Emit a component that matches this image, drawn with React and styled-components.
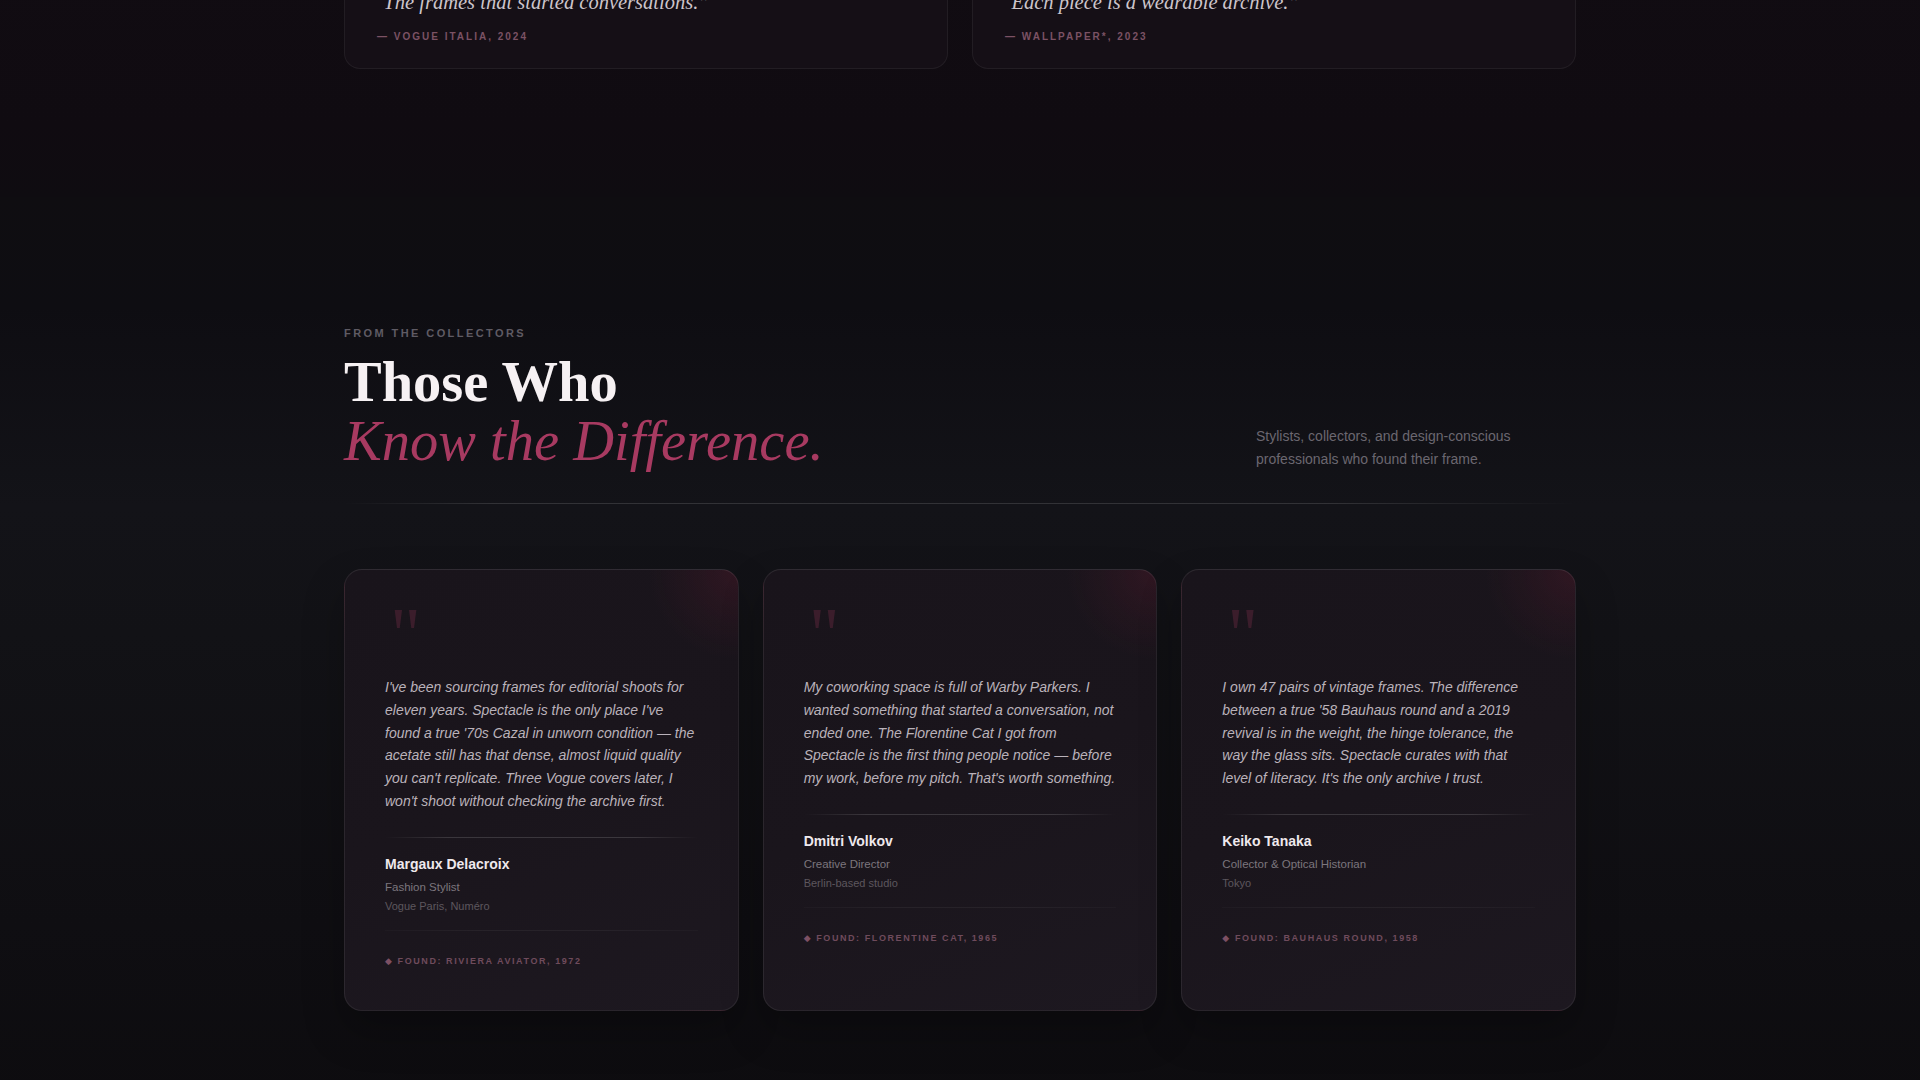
import React from 'react';
import styled, { createGlobalStyle } from 'styled-components';

const GlobalStyle = createGlobalStyle`
  *, *::before, *::after { box-sizing: border-box; }
  html, body { margin: 0; padding: 0; background: #0d0c0f; }
  body {
    font-family: "Liberation Sans", Arial, sans-serif;
    -webkit-font-smoothing: antialiased;
  }
`;

const Page = styled.main`
  min-height: 100vh;
  overflow: hidden;
`;

const PressSection = styled.section`
  background: linear-gradient(180deg, #110c12 0%, #100b11 70%, #0f0c11 100%);
  margin-top: -46px;
  padding: 0 0 128px;
`;

const Container = styled.div`
  width: 1232px;
  margin: 0 auto;
`;

const PressGrid = styled.div`
  display: grid;
  grid-template-columns: 1fr 1fr;
  gap: 24px;
`;

const PressCard = styled.figure`
  margin: 0;
  padding: 32px 32px 24px;
  background: #150f16;
  border: 1px solid rgba(255, 255, 255, 0.06);
  border-radius: 16px;
`;

const PressQuote = styled.blockquote`
  margin: 0 0 12px;
  font-family: "Liberation Serif", "Times New Roman", serif;
  font-style: italic;
  font-size: 20.5px;
  line-height: 30px;
  text-indent: -5px;
  color: #cdc5cb;
`;

const PressCite = styled.figcaption`
  font-size: 10px;
  line-height: 15px;
  font-weight: 700;
  letter-spacing: 0.2em;
  text-transform: uppercase;
  color: #7b5264;
`;

const TestimonialSection = styled.section`
  padding: 128px 0 96px;
  background: linear-gradient(
    180deg,
    #0f0d11 0%,
    #0e0d12 12%,
    #131318 34%,
    #121216 48%,
    #0f0e12 80%,
    #0d0c0f 100%
  );
`;

const Eyebrow = styled.div`
  font-size: 11px;
  line-height: 16px;
  font-weight: 700;
  letter-spacing: 0.22em;
  text-transform: uppercase;
  color: #5f5b64;
  margin-bottom: 12px;
`;

const HeaderRow = styled.header`
  display: flex;
  justify-content: space-between;
  align-items: flex-end;
`;

const Heading = styled.h2`
  margin: 0;
  font-family: "Liberation Serif", "Times New Roman", serif;
  font-size: 56.5px;
  line-height: 1.045;
  font-weight: 700;
  color: #f6f1f3;
`;

const Accent = styled.em`
  display: block;
  font-style: italic;
  font-weight: 400;
  color: #a83a61;
`;

const Lede = styled.p`
  margin: 0 0 1px;
  width: 320px;
  font-size: 14px;
  line-height: 22.4px;
  color: #6b6770;
`;

const Rule = styled.div`
  height: 1px;
  margin: 32px 0 65px;
  background: linear-gradient(
    90deg,
    rgba(255, 255, 255, 0) 0%,
    rgba(255, 255, 255, 0.13) 12%,
    rgba(255, 255, 255, 0.13) 80%,
    rgba(255, 255, 255, 0) 100%
  );
`;

const CardGrid = styled.div`
  display: grid;
  grid-template-columns: repeat(3, 1fr);
  gap: 24px;
  align-items: stretch;
`;

const Card = styled.article`
  padding: 40px 40px 41px;
  border-radius: 18px;
  border: 1px solid rgba(255, 255, 255, 0.07);
  border-top-color: rgba(255, 255, 255, 0.09);
  background:
    radial-gradient(circle at 100% 0%, rgba(140, 30, 60, 0.2) 0px, rgba(140, 30, 60, 0.08) 50px, rgba(140, 30, 60, 0) 90px),
    linear-gradient(160deg, #19141b 0%, #1a151c 50%, #1d1820 100%);
  box-shadow: 0 20px 40px rgba(0, 0, 0, 0.25);
`;

const QuoteMark = styled.div`
  height: 60px;
  margin: 0 0 6px 5px;
  font-family: "Liberation Serif", "Times New Roman", serif;
  font-size: 76px;
  line-height: 48px;
  color: rgba(166, 58, 96, 0.24);
  user-select: none;
`;

const QuoteText = styled.p`
  margin: 0;
  font-style: italic;
  font-size: 14px;
  line-height: 22.75px;
  color: #bab2ba;
`;

const AuthorRule = styled.div`
  height: 1px;
  margin: 24px 0 16px;
  background: linear-gradient(
    90deg,
    rgba(255, 255, 255, 0) 0%,
    rgba(255, 255, 255, 0.14) 20%,
    rgba(255, 255, 255, 0.14) 80%,
    rgba(255, 255, 255, 0) 100%
  );
`;

const Name = styled.div`
  font-size: 14px;
  line-height: 20px;
  font-weight: 700;
  color: #efe9ed;
  margin-bottom: 4px;
`;

const Role = styled.div`
  font-size: 11.5px;
  line-height: 18px;
  color: #7c767d;
`;

const Org = styled.div`
  margin-top: 2px;
  font-size: 11px;
  line-height: 16px;
  color: #5d575e;
`;

const FoundRule = styled.div`
  height: 1px;
  margin-top: 16px;
  background: linear-gradient(
    90deg,
    rgba(255, 255, 255, 0.02) 0%,
    rgba(255, 255, 255, 0.05) 30%,
    rgba(255, 255, 255, 0.05) 70%,
    rgba(255, 255, 255, 0.02) 100%
  );
`;

const Found = styled.div`
  margin-top: 22px;
  font-size: 9px;
  line-height: 16px;
  font-weight: 700;
  letter-spacing: 0.175em;
  text-transform: uppercase;
  color: #6f4b5c;
`;

const Diamond = styled.span`
  font-family: "DejaVu Sans", sans-serif;
  color: #7d5064;
`;

const press = [
  { quote: '\u201CThe frames that started conversations.\u201D', cite: '\u2014 Vogue Italia, 2024' },
  { quote: '\u201CEach piece is a wearable archive.\u201D', cite: '\u2014 Wallpaper*, 2023' },
];

const testimonials = [
  {
    text: "I've been sourcing frames for editorial shoots for eleven years. Spectacle is the only place I've found a true '70s Cazal in unworn condition \u2014 the acetate still has that dense, almost liquid quality you can't replicate. Three Vogue covers later, I won't shoot without checking the archive first.",
    name: 'Margaux Delacroix',
    role: 'Fashion Stylist',
    org: 'Vogue Paris, Num\u00e9ro',
    found: 'Found: Riviera Aviator, 1972',
  },
  {
    text: "My coworking space is full of Warby Parkers. I wanted something that started a conversation, not ended one. The Florentine Cat I got from Spectacle is the first thing people notice \u2014 before my work, before my pitch. That's worth something.",
    name: 'Dmitri Volkov',
    role: 'Creative Director',
    org: 'Berlin-based studio',
    found: 'Found: Florentine Cat, 1965',
  },
  {
    text: "I own 47 pairs of vintage frames. The difference between a true '58 Bauhaus round and a 2019 revival is in the weight, the hinge tolerance, the way the glass sits. Spectacle curates with that level of literacy. It's the only archive I trust.",
    name: 'Keiko Tanaka',
    role: 'Collector & Optical Historian',
    org: 'Tokyo',
    found: 'Found: Bauhaus Round, 1958',
  },
];

export default function App() {
  return (
    <Page>
      <GlobalStyle />
      <PressSection>
        <Container>
          <PressGrid>
            {press.map((p) => (
              <PressCard key={p.cite}>
                <PressQuote>{p.quote}</PressQuote>
                <PressCite>{p.cite}</PressCite>
              </PressCard>
            ))}
          </PressGrid>
        </Container>
      </PressSection>

      <TestimonialSection>
        <Container>
          <Eyebrow>From the Collectors</Eyebrow>
          <HeaderRow>
            <Heading>
              Those Who
              <Accent>Know the Difference.</Accent>
            </Heading>
            <Lede>
              Stylists, collectors, and design-conscious professionals who found their frame.
            </Lede>
          </HeaderRow>
          <Rule />
          <CardGrid>
            {testimonials.map((t) => (
              <Card key={t.name}>
                <QuoteMark aria-hidden="true">"</QuoteMark>
                <QuoteText>{t.text}</QuoteText>
                <AuthorRule />
                <Name>{t.name}</Name>
                <Role>{t.role}</Role>
                <Org>{t.org}</Org>
                <FoundRule />
                <Found>
                  <Diamond>{'\u25C6'}</Diamond> {t.found}
                </Found>
              </Card>
            ))}
          </CardGrid>
        </Container>
      </TestimonialSection>
    </Page>
  );
}
